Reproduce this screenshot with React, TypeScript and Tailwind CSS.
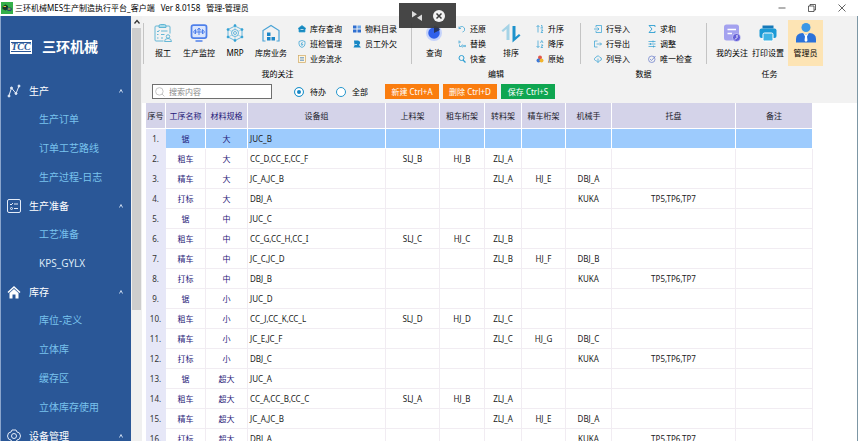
import type { ReactNode } from 'react';

interface IconProps {
  className?: string;
  children: ReactNode;
  viewBox?: string;
}

function Icon({ className = 'w-2 h-2', viewBox = '0 0 16 16', children }: IconProps) {
  return (
    <svg
      className={`${className} shrink-0`}
      viewBox={viewBox}
      fill="none"
      stroke="#2e9fd3"
      strokeWidth="1.4"
      aria-hidden="true"
    >
      {children}
    </svg>
  );
}

const BIG = 'w-[18px] h-5';

const reportIcon = (
  <Icon className={BIG} viewBox="0 0 36 36">
    <g stroke="#55b0d2" strokeWidth="1.8">
      <path d="M19 34H4q-2 0-2-2V6q0-2 2-2h26q2 0 2 2v13" />
      <path d="M10 4q0-3 3-3h8q3 0 3 3v3H10z" fill="#a9dbe8" />
      <path d="M6 14l2 2 3-4M14 14h13M6 21h3M14 21h7M6 28h3M14 28h4" />
      <circle cx="28" cy="25" r="3.500" />
      <path d="M21 35q0-6 7-6t7 6z" />
    </g>
  </Icon>
);

const monitorIcon = (
  <Icon className={BIG} viewBox="0 0 36 36">
    <g stroke="#4f80ea">
      <rect x="3" y="2" width="30" height="26" rx="4" strokeWidth="3.500" fill="#dbe6fc" />
      <path d="M11 34h14" strokeWidth="3" />
      <path d="M18 8v14M11 11l-4 5 4 4zM25 11l4 5-4 4zM14 13l4-5 4 5M11 16h14" strokeWidth="2" />
    </g>
  </Icon>
);

const mrpIcon = (
  <Icon className={BIG} viewBox="0 0 36 36">
    <path d="M18 4L32 11V26L18 33L4 26V11Z" />
    <circle cx="18" cy="18" r="7" />
    <path d="M18 4v7M18 25v8M4 11l8 4M32 11l-8 4M4 26l8-4M32 26l-8-4" stroke="#7cc3e2" />
    <circle cx="18" cy="18" r="3" />
    <g fill="#2e9fd3">
      <circle cx="18" cy="3" r="2" />
      <circle cx="32" cy="11" r="2" />
      <circle cx="32" cy="26" r="2" />
      <circle cx="18" cy="33" r="2" />
      <circle cx="4" cy="26" r="2" />
      <circle cx="4" cy="11" r="2" />
    </g>
  </Icon>
);

const warehouseIcon = (
  <Icon className={BIG} viewBox="0 0 36 36">
    <path d="M7 34H2V13L18 3L34 13V34H29" strokeWidth="2.400" stroke="#4aa3d6" />
    <g fill="#1b86c8" stroke="none">
      <rect x="10" y="17" width="7" height="7" />
      <rect x="10" y="26" width="7" height="7" />
      <rect x="19" y="26" width="7" height="7" />
    </g>
  </Icon>
);

const queryIcon = (
  <Icon className={BIG} viewBox="0 0 36 36">
    <circle cx="18" cy="18" r="16" fill="#c5d3fb" stroke="none" />
    <circle cx="18" cy="18" r="11.5" fill="#2f60ea" stroke="none" />
    <path d="M18 18V4a14 14 0 0 1 12 8z" fill="#26355f" stroke="none" />
  </Icon>
);

const sortIcon = (
  <Icon className="w-5 h-5" viewBox="0 0 40 40">
    <path d="M17 34V1L1 15l3 3 7-6v22z" fill="#a5d3e6" stroke="none" />
    <path d="M23 6V39L39 25l-3-3-7 6V6z" fill="#1d92cc" stroke="none" />
  </Icon>
);

const followIcon = (
  <Icon className={BIG} viewBox="0 0 36 36">
    <rect x="2" y="1" width="30" height="32" rx="5" fill="#a4a2ef" stroke="none" />
    <path d="M9 11h17M9 19h9" stroke="#fff" strokeWidth="3" />
    <circle cx="27" cy="27" r="8" fill="#6560d8" stroke="#fff" strokeWidth="1" />
    <path d="M28 22v5l-4 4" stroke="#fff" strokeWidth="2" />
  </Icon>
);

const printIcon = (
  <Icon className={BIG} viewBox="0 0 36 36">
    <path d="M7 3h22v6H7z" fill="#1679b9" stroke="none" />
    <rect x="1" y="9" width="34" height="19" rx="4" fill="#1b9ad6" stroke="none" />
    <rect x="8" y="18" width="20" height="16" rx="3" fill="#3eb3e4" stroke="#fff" strokeWidth="2" />
  </Icon>
);

const adminIcon = (
  <Icon className="w-5 h-5" viewBox="0 0 40 40">
    <circle cx="20" cy="9" r="9" fill="#3b98e6" stroke="none" />
    <path d="M0 39V32Q0 21 13 20L20 24L27 20Q40 21 40 32V39Z" fill="#2b72da" stroke="none" />
    <path d="M15 21l5 3 5-3-3 6 1 8-3 3-3-3 1-8z" fill="#fff" stroke="none" />
  </Icon>
);

interface SmallTool {
  label: string;
  icon: ReactNode;
}

const stockTools: SmallTool[] = [
  {
    label: '库存查询',
    icon: (
      <Icon>
        <path d="M8 1L1 6v2h1v6h12V8h1V6z" fill="#1787bd" />
        <path d="M5 9h6" stroke="#fff" />
      </Icon>
    ),
  },
  {
    label: '班检管理',
    icon: (
      <Icon>
        <path d="M8 1l6 2v5q0 5-6 7-6-2-6-7V3z" />
        <path d="M9 4L6 8.500h4L7 12" />
      </Icon>
    ),
  },
  {
    label: '业务流水',
    icon: (
      <Icon>
        <rect x="1" y="1" width="14" height="14" fill="#fff6df" stroke="#d0a860" />
        <path d="M4 5h8M4 8h8M4 11h8" stroke="#5a8ec0" />
      </Icon>
    ),
  },
];

const materialTools: SmallTool[] = [
  {
    label: '物料目录',
    icon: (
      <Icon>
        <g stroke="none" fill="#2f6fd0">
          <rect x="0" y="1" width="7" height="6" />
          <rect x="9" y="1" width="7" height="6" fill="#69a5ea" />
          <rect x="0" y="9" width="7" height="6" />
          <rect x="9" y="9" width="7" height="6" />
        </g>
      </Icon>
    ),
  },
  {
    label: '员工外欠',
    icon: (
      <Icon>
        <path d="M2 1h8q5 1 4 6l-2 3 4 5H1l2-4z" fill="#1787c5" stroke="none" />
        <path d="M3 9h5" stroke="#fff" />
      </Icon>
    ),
  },
];

const editTools: SmallTool[] = [
  {
    label: '还原',
    icon: (
      <Icon>
        <path d="M2 3v4h4M2 7q2-5 7-4 6 2 4 8-1 2-4 3" />
      </Icon>
    ),
  },
  {
    label: '替换',
    icon: (
      <Icon>
        <path d="M2 1v6M2 4h4M3 9v4h3" />
        <circle cx="9" cy="12" r="2" />
        <circle cx="14" cy="12" r="1.500" />
      </Icon>
    ),
  },
  {
    label: '快查',
    icon: (
      <Icon>
        <circle cx="7" cy="6" r="5" strokeWidth="2" />
        <path d="M10 10l5 5" strokeWidth="2.500" />
      </Icon>
    ),
  },
];

const orderTools: SmallTool[] = [
  {
    label: '升序',
    icon: (
      <Icon>
        <path d="M4 15V1M1 4l3-3 3 3M10 1h2v5M9 6h5M10 10h4l-4 5h4" />
      </Icon>
    ),
  },
  {
    label: '降序',
    icon: (
      <Icon>
        <path d="M4 1v14M1 12l3 3 3-3M9 6l2.500-5L14 6M10 10h4l-4 5h4" />
      </Icon>
    ),
  },
  {
    label: '原始',
    icon: (
      <Icon>
        <circle cx="8" cy="5" r="4" fill="#e2574c" stroke="none" />
        <circle cx="5" cy="11" r="4" fill="#3d78d8" stroke="none" />
        <circle cx="11" cy="11" r="4" fill="#f2b52c" stroke="none" />
      </Icon>
    ),
  },
];

const importTools: SmallTool[] = [
  {
    label: '行导入',
    icon: (
      <Icon>
        <path d="M4 5V1h11v14H4v-4M0 8h10M7 5l3 3-3 3" />
      </Icon>
    ),
  },
  {
    label: '行导出',
    icon: (
      <Icon>
        <path d="M7 2H1v12h6M5 8h10M12 5l3 3-3 3" />
      </Icon>
    ),
  },
  {
    label: '列导入',
    icon: (
      <Icon>
        <path d="M5 11H3q-3-1-2-4 1-2 3-2 1-4 5-3 2 1 3 3 3 0 3 3t-3 3h-1M8 7v8M5 12l3 3 3-3" />
      </Icon>
    ),
  },
];

const dataTools: SmallTool[] = [
  {
    label: '求和',
    icon: (
      <Icon>
        <path d="M14 4V1H2l6 7-6 7h12v-3" strokeWidth="1.800" />
      </Icon>
    ),
  },
  {
    label: '调整',
    icon: (
      <Icon>
        <path d="M1 3h14M1 8h14M1 13h14M10 1v4M5 6v4M11 11v4" />
      </Icon>
    ),
  },
  {
    label: '唯一检查',
    icon: (
      <Icon>
        <circle cx="7.500" cy="8.500" r="6.500" stroke="#6478c8" />
        <path d="M4 8l3 3 8-9" stroke="#6478c8" />
      </Icon>
    ),
  },
];

function BigTool({ label, icon, active }: { label: string; icon: ReactNode; active?: boolean }) {
  return (
    <button
      className={`flex h-[46px] flex-col items-center gap-1 pt-[3px] whitespace-nowrap ${
        active ? 'w-[35px] bg-[#fde4b4]' : ''
      }`}
    >
      {icon}
      <span className="leading-3">{label}</span>
    </button>
  );
}

function ToolList({ tools }: { tools: SmallTool[] }) {
  return (
    <div className="flex flex-col gap-[3px] pt-[3px]">
      {tools.map((tool) => (
        <button key={tool.label} className="flex items-center gap-1 leading-3 whitespace-nowrap">
          {tool.icon}
          {tool.label}
        </button>
      ))}
    </div>
  );
}

function Group({ title, className, children }: { title: string; className: string; children: ReactNode }) {
  return (
    <section className="flex flex-col gap-0.5">
      <div className={`flex h-[46px] ${className}`}>{children}</div>
      <h2 className="text-center leading-3">{title}</h2>
    </section>
  );
}

function Divider() {
  return <div className="mt-[3px] h-[41px] w-px shrink-0 bg-[#c4c4c4]" />;
}

const menu = [
  {
    title: '生产',
    items: ['生产订单', '订单工艺路线', '生产过程-日志'],
    icon: (
      <Icon className="w-3.5 h-3.5" viewBox="0 0 28 28">
        <g stroke="#e4ecf8" strokeWidth="2" fill="#e4ecf8">
          <path d="M4 23L9 8L18 19L24 4" fill="none" />
          <circle cx="4" cy="24" r="2" />
          <circle cx="9" cy="8" r="2" />
          <circle cx="18" cy="19" r="2" />
          <circle cx="24" cy="4" r="2" />
        </g>
      </Icon>
    ),
  },
  {
    title: '生产准备',
    items: ['工艺准备', 'KPS_GYLX'],
    icon: (
      <Icon className="w-3.5 h-3.5" viewBox="0 0 28 28">
        <g stroke="#e4ecf8" strokeWidth="2">
          <rect x="1" y="1" width="26" height="26" rx="3" />
          <path d="M6 10l2 2 4-4M14 10h8M14 19h8" />
          <circle cx="9" cy="19" r="2" />
        </g>
      </Icon>
    ),
  },
  {
    title: '库存',
    items: ['库位-定义', '立体库', '缓存区', '立体库存使用'],
    icon: (
      <Icon className="w-3.5 h-3.5" viewBox="0 0 28 28">
        <path d="M2 15L14 4L26 15" stroke="#fff" strokeWidth="3" />
        <path d="M5 16L14 8L23 16V27H17V19H11V27H5Z" fill="#fff" stroke="none" />
      </Icon>
    ),
  },
  {
    title: '设备管理',
    items: [],
    icon: (
      <Icon className="w-3.5 h-3.5" viewBox="0 0 28 28">
        <g stroke="#e4ecf8" strokeWidth="2">
          <path d="M10 2h8l2 4 5 2 2 6-2 6-5 2-2 4h-8l-2-4-5-2-2-6 2-6 5-2z" />
          <circle cx="14" cy="14" r="5" />
        </g>
      </Icon>
    ),
  },
];

const columns = [
  { title: '序号', width: 'w-5' },
  { title: '工序名称', width: 'w-10' },
  { title: '材料规格', width: 'w-[42px]' },
  { title: '设备组', width: 'w-[138px]' },
  { title: '上料架', width: 'w-[54px]' },
  { title: '粗车桁架', width: 'w-[45px]' },
  { title: '转料架', width: 'w-[37px]' },
  { title: '精车桁架', width: 'w-11' },
  { title: '机械手', width: 'w-[46px]' },
  { title: '托盘', width: 'w-[124px]' },
  { title: '备注', width: 'w-[77px]' },
];

const rows = [
  ['锯', '大', 'JUC_B', '', '', '', '', '', '', ''],
  ['粗车', '大', 'CC_D,CC_E,CC_F', 'SLJ_B', 'HJ_B', 'ZLJ_A', '', '', '', ''],
  ['精车', '大', 'JC_A,JC_B', '', '', 'ZLJ_A', 'HJ_E', 'DBJ_A', '', ''],
  ['打标', '大', 'DBJ_A', '', '', '', '', 'KUKA', 'TP5,TP6,TP7', ''],
  ['锯', '中', 'JUC_C', '', '', '', '', '', '', ''],
  ['粗车', '中', 'CC_G,CC_H,CC_I', 'SLJ_C', 'HJ_C', 'ZLJ_B', '', '', '', ''],
  ['精车', '中', 'JC_C,JC_D', '', '', 'ZLJ_B', 'HJ_F', 'DBJ_B', '', ''],
  ['打标', '中', 'DBJ_B', '', '', '', '', 'KUKA', 'TP5,TP6,TP7', ''],
  ['锯', '小', 'JUC_D', '', '', '', '', '', '', ''],
  ['粗车', '小', 'CC_J,CC_K,CC_L', 'SLJ_D', 'HJ_D', 'ZLJ_C', '', '', '', ''],
  ['精车', '小', 'JC_E,JC_F', '', '', 'ZLJ_C', 'HJ_G', 'DBJ_C', '', ''],
  ['打标', '小', 'DBJ_C', '', '', '', '', 'KUKA', 'TP5,TP6,TP7', ''],
  ['锯', '超大', 'JUC_A', '', '', '', '', '', '', ''],
  ['粗车', '超大', 'CC_A,CC_B,CC_C', 'SLJ_A', 'HJ_B', 'ZLJ_A', '', '', '', ''],
  ['精车', '超大', 'JC_A,JC_B', '', '', 'ZLJ_A', 'HJ_E', 'DBJ_A', '', ''],
  ['打标', '超大', 'DBJ_A', '', '', '', '', 'KUKA', 'TP5,TP6,TP7', ''],
];

function TitleBar() {
  return (
    <header className="flex h-4 shrink-0 items-center bg-white pr-3 pl-px">
      <svg className="h-3 w-3" viewBox="0 0 24 24" aria-hidden="true">
        <rect width="24" height="24" fill="#35b04a" />
        <path d="M3 9l6-4 5 3v6l-5 3-6-3z" fill="#173a2b" />
        <path d="M12 11h8l2 3-2 4h-7z" fill="#22506e" />
        <path d="M5 9h5M14 14h5" stroke="#e8c43a" strokeWidth="2" />
      </svg>
      <h1 className="ml-0.5 flex gap-1.5 whitespace-nowrap">
        <span>三环机械MES生产制造执行平台_客户端</span>
        <span>Ver 8.0158</span>
        <span>管理-管理员</span>
      </h1>
      <div className="ml-auto flex items-center gap-[22px]">
        <button aria-label="最小化">
          <Icon>
            <path d="M1 8h14" stroke="#222" />
          </Icon>
        </button>
        <button aria-label="还原窗口">
          <Icon>
            <path d="M1 4h11v11H1zM4 4V1h11v11h-3" stroke="#222" />
          </Icon>
        </button>
        <button aria-label="关闭">
          <Icon>
            <path d="M1 1l14 14M15 1L1 15" stroke="#222" />
          </Icon>
        </button>
      </div>
    </header>
  );
}

function Sidebar() {
  return (
    <aside className="flex w-[142px] shrink-0 overflow-hidden">
      <nav className="flex-1 border-l border-[#8aa5cc] bg-[#2a5797] text-[10px]">
        <div className="flex h-[61px] items-center gap-2.5 pl-[9px] text-white">
          <div className="w-[22px] border border-white bg-white py-px">
            <div className="flex h-2.5 items-center justify-center border-y border-[#2a5797] font-['Liberation_Serif',serif] text-[10px] leading-none font-bold text-[#2a5797] italic">
              TCC
            </div>
          </div>
          <span className="text-sm font-bold">三环机械</span>
        </div>
        {menu.map((group) => (
          <div key={group.title}>
            <button className="flex h-7 w-full items-center gap-2 pr-2 pl-1.5 text-white">
              {group.icon}
              {group.title}
              <svg className="ml-auto h-1 w-1" viewBox="0 0 8 8" fill="none" stroke="#d5e2f4" strokeWidth="1.800">
                <path d="M1 7l3-6 3 6" />
              </svg>
            </button>
            {group.items.map((item) => (
              <a
                key={item}
                href="#"
                className={`flex h-[29px] items-center pl-[38px] ${
                  item === 'KPS_GYLX' ? 'text-[#dce9f6]' : 'text-[#79c3ee]'
                }`}
              >
                {item}
              </a>
            ))}
          </div>
        ))}
      </nav>
      {/* Scrollbar */}
      <div className="flex w-[11px] flex-col bg-[#f0f0f0]">
        <div className="flex h-3 items-center justify-center">
          <svg className="h-1.5 w-1.5" viewBox="0 0 12 12" fill="none" stroke="#333" strokeWidth="2.500">
            <path d="M1 9l5-6 5 6" />
          </svg>
        </div>
        <div className="mx-px h-[282px] bg-[#cdcdcd]" />
      </div>
    </aside>
  );
}

function Ribbon() {
  return (
    <div className="flex shrink-0 flex-col gap-1 overflow-hidden bg-[#f2f2f2] py-1">
      <div className="flex pl-px">
        <Divider />
        <Group title="我的关注" className="gap-[11px] pr-3.5 pl-2.5">
          <BigTool label="报工" icon={reportIcon} />
          <BigTool label="生产监控" icon={monitorIcon} />
          <BigTool label="MRP" icon={mrpIcon} />
          <BigTool label="库房业务" icon={warehouseIcon} />
          <ToolList tools={stockTools} />
          <ToolList tools={materialTools} />
        </Group>
        <Divider />
        <Group title="编辑" className="gap-[15px] pr-4 pl-[13px]">
          <BigTool label="查询" icon={queryIcon} />
          <ToolList tools={editTools} />
          <BigTool label="排序" icon={sortIcon} />
          <ToolList tools={orderTools} />
        </Group>
        <Divider />
        <Group title="数据" className="gap-[18px] pr-3.5 pl-[13px]">
          <ToolList tools={importTools} />
          <ToolList tools={dataTools} />
        </Group>
        <Divider />
        <Group title="任务" className="gap-1 px-[9px]">
          <BigTool label="我的关注" icon={followIcon} />
          <BigTool label="打印设置" icon={printIcon} />
          <BigTool label="管理员" icon={adminIcon} active />
        </Group>
      </div>

      {/* Search and actions */}
      <div className="flex h-[15px] items-center pl-2.5">
        <label className="flex h-[15px] w-[120px] items-center gap-1 border border-[#6f6f6f] bg-white pl-0.5">
          <Icon className="h-2.5 w-2.5">
            <circle cx="7" cy="7" r="6" stroke="#bdbdbd" />
            <path d="M11 11l4 4" stroke="#bdbdbd" />
          </Icon>
          <input
            type="text"
            aria-label="搜索内容"
            placeholder="搜索内容"
            className="w-full min-w-0 leading-3 outline-none placeholder:text-[#8a8a8a]"
          />
        </label>
        <div className="ml-[22px] flex gap-2.5">
          {['待办', '全部'].map((name, i) => (
            <label key={name} className="flex items-center gap-1.5 whitespace-nowrap">
              <input
                type="radio"
                name="scope"
                defaultChecked={i === 0}
                className="h-2.5 w-2.5 appearance-none rounded-full border border-[#2496cd] bg-white checked:bg-[#1787c5] checked:shadow-[inset_0_0_0_2px_white]"
              />
              {name}
            </label>
          ))}
        </div>
        <div className="ml-[17px] flex gap-1 text-white">
          <button className="h-[15px] w-[54px] bg-[#fa7d0f] whitespace-nowrap">新建 Ctrl+A</button>
          <button className="h-[15px] w-[54px] bg-[#fa7d0f] whitespace-nowrap">删除 Ctrl+D</button>
          <button className="h-[15px] w-[54px] bg-[#0fa651] whitespace-nowrap">保存 Ctrl+S</button>
        </div>
      </div>
    </div>
  );
}

function ProcessTable() {
  return (
    <div className="min-h-0 flex-1 overflow-hidden pl-1">
      <table className="w-[667px] table-fixed border-separate border-spacing-0 leading-3">
        <thead>
          <tr className="h-[26px]">
            {columns.map((col, i) => (
              <th
                key={col.title}
                className={`${col.width} border-r border-b border-white bg-[#d4d3e9] p-0 font-normal whitespace-nowrap ${
                  i === 1 || i === 2 ? 'text-[#1f1a78]' : 'text-[#1c1c2c]'
                }`}
              >
                {col.title}
              </th>
            ))}
          </tr>
        </thead>
        <tbody>
          {rows.map((row, r) => (
            <tr key={r} className={`h-5 ${r === 0 ? 'bg-[#9dcbfd]' : 'bg-white'}`}>
              <td className="border-r border-b border-[#e6e7f7] bg-[#e6e7f7] p-0 text-center text-[#333]">{r + 1}.</td>
              {row.map((cell, c) => (
                <td
                  key={c}
                  className={`border-r border-b p-0 whitespace-nowrap ${r === 0 ? 'border-white' : 'border-[#f1ecf2]'} ${
                    c === 2 ? 'pl-0.5 text-left' : 'text-center'
                  } ${c < 2 ? 'text-[#1f1a78]' : 'text-[#222]'}`}
                >
                  {cell}
                </td>
              ))}
            </tr>
          ))}
        </tbody>
      </table>
    </div>
  );
}

export default function App() {
  return (
    <div className="relative flex h-screen flex-col overflow-hidden bg-white font-['Noto_Sans','Noto_Sans_CJK_SC',sans-serif] text-[8px] text-black">
      <TitleBar />
      <div className="flex min-h-0 flex-1">
        <Sidebar />
        <main className="flex min-w-0 flex-1 flex-col border-r border-[#7d97a5]">
          <Ribbon />
          <ProcessTable />
        </main>
      </div>

      {/* Floating session toolbar */}
      <div className="absolute top-[3px] left-1/2 flex h-[25px] w-[57px] -translate-x-[30px] items-center justify-center gap-2.5 bg-[#3c3c3c]/95">
        <button aria-label="缩放">
          <Icon className="h-3 w-3" viewBox="0 0 24 24">
            <path d="M2 2v13l10-6.500zM22 9v13l-10-6.500z" fill="#dcdcdc" stroke="none" />
          </Icon>
        </button>
        <button aria-label="断开">
          <Icon className="h-3 w-3" viewBox="0 0 24 24">
            <circle cx="12" cy="12" r="12" fill="#f2f2f2" stroke="none" />
            <path d="M7 7l10 10M17 7L7 17" stroke="#3c3c3c" strokeWidth="3" />
          </Icon>
        </button>
      </div>
    </div>
  );
}
